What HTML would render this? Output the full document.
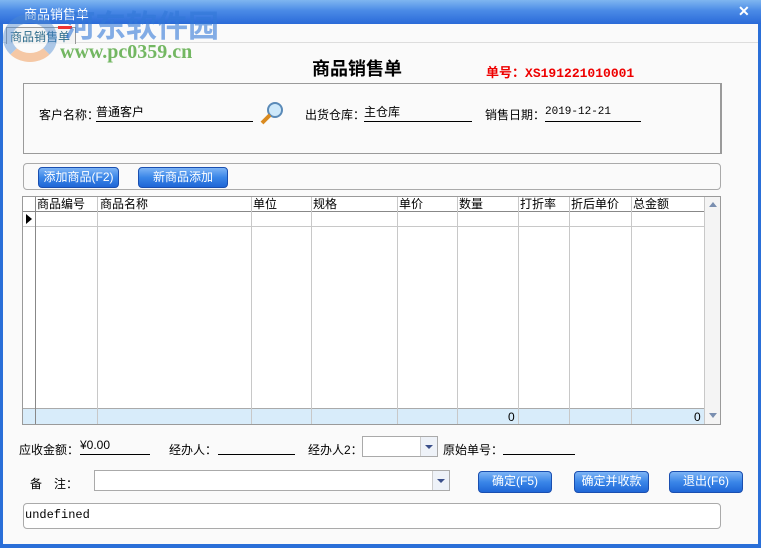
<!DOCTYPE html>
<html><head><meta charset="utf-8"><style>
*{margin:0;padding:0;box-sizing:border-box}
body{width:761px;height:548px;overflow:hidden;background:#2a6fd8;font-family:"Liberation Sans","Noto Sans CJK SC",sans-serif;font-size:12px;color:#000;position:relative}
.a{position:absolute}
.title{left:0;top:0;width:761px;height:24px;background:linear-gradient(#7fb6f0,#4a8ae6 45%,#2a6ad8);}
.win{left:3px;top:24px;width:755px;height:520px;background:#fafafa}
.u{border-bottom:1px solid #000}
.btn{background:linear-gradient(#7db4f5,#3a86e8 50%,#1f66d6);border:1px solid #1a4fb0;border-radius:4px;color:#fff;text-align:center;line-height:19px;font-size:12px}
.grid{left:22px;top:196px;width:699px;height:229px;border:1px solid #9a9a9a;background:#fff}
.vl{top:0;width:1px;height:227px;background:#c8c8c8}
.hd{font-size:12px;top:0;line-height:15px}
</style></head><body>
<div class="a title"></div>
<div class="a" style="left:24px;top:4px;color:#fff;font-size:13px">商品销售单</div>
<div class="a" style="left:738px;top:3px;color:#fff;font-weight:bold;font-size:14px">✕</div>
<div class="a win"></div>
<div class="a" style="left:3px;top:42px;width:755px;height:1px;background:#ddd"></div>
<div class="a" style="left:6px;top:27px;width:70px;height:17px;border:1px solid #999;border-bottom:none;background:#f3f3f3;font-size:12px;padding-left:3px;color:#2a6a8a">商品销售单</div>
<div class="a" style="left:58px;top:26px;width:14px;height:3px;background:#e33"></div>
<div class="a" style="left:64px;top:4px;font-size:31px;font-weight:bold;color:rgba(50,120,215,.6);font-family:'Noto Sans CJK SC',sans-serif;line-height:40px">河东软件园</div>
<div class="a" style="left:60px;top:41px;font-size:20px;font-weight:bold;color:rgba(90,170,70,.85);font-family:'Liberation Serif',serif">www.pc0359.cn</div>
<div class="a" style="left:3px;top:14px;width:54px;height:48px;border-radius:50%;border:9px solid rgba(80,140,210,.45);border-bottom-color:rgba(240,150,80,.5)"></div>

<div class="a" style="left:312px;top:55px;font-size:18px;font-weight:bold">商品销售单</div>
<div class="a" style="left:486px;top:62px;color:#e00;font-weight:bold;font-size:13px">单号：<span style="font-family:'Liberation Mono',monospace">XS191221010001</span></div>

<div class="a" style="left:23px;top:83px;width:699px;height:71px;border:1px solid #9a9a9a;border-right-width:2px"></div>
<div class="a" style="left:39px;top:106px">客户名称：</div>
<div class="a u" style="left:96px;top:104px;width:157px;height:18px;line-height:16px">普通客户</div>
<svg class="a" style="left:259px;top:100px" width="26" height="26"><circle cx="16" cy="10" r="7" fill="#cde8fa" stroke="#5a8ab8" stroke-width="2"/><line x1="11" y1="15" x2="3" y2="23" stroke="#d98a20" stroke-width="4"/></svg>
<div class="a" style="left:305px;top:106px">出货仓库：</div>
<div class="a u" style="left:364px;top:104px;width:108px;height:18px;line-height:16px">主仓库</div>
<div class="a" style="left:485px;top:106px">销售日期：</div>
<div class="a u" style="left:545px;top:104px;width:96px;height:18px;line-height:16px;font-family:'Liberation Mono',monospace;font-size:11px">2019-12-21</div>

<div class="a" style="left:23px;top:163px;width:698px;height:27px;border:1px solid #aaa;border-radius:4px"></div>
<div class="a btn" style="left:38px;top:167px;width:81px;height:21px">添加商品(F2)</div>
<div class="a btn" style="left:138px;top:167px;width:90px;height:21px">新商品添加</div>

<div class="a grid">
<div class="a" style="left:0;top:0;width:681px;height:15px;border-bottom:1px solid #888"></div>
<div class="a" style="left:0;top:15px;width:681px;height:15px;border-bottom:1px solid #c8c8c8"></div>
<div class="a" style="left:0;top:211px;width:681px;height:16px;background:#d8ecfa;border-top:1px solid #aaa"></div>
<div class="a vl" style="left:12px;background:#888"></div>
<div class="a vl" style="left:74px"></div><div class="a vl" style="left:228px"></div><div class="a vl" style="left:288px"></div><div class="a vl" style="left:374px"></div><div class="a vl" style="left:434px"></div><div class="a vl" style="left:495px"></div><div class="a vl" style="left:546px"></div><div class="a vl" style="left:608px"></div><div class="a vl" style="left:681px"></div>
<div class="a hd" style="left:14px">商品编号</div><div class="a hd" style="left:77px">商品名称</div><div class="a hd" style="left:230px">单位</div><div class="a hd" style="left:290px">规格</div><div class="a hd" style="left:376px">单价</div><div class="a hd" style="left:436px">数量</div><div class="a hd" style="left:497px">打折率</div><div class="a hd" style="left:548px">折后单价</div><div class="a hd" style="left:610px">总金额</div>
<div class="a" style="left:3px;top:17px;width:0;height:0;border-left:6px solid #000;border-top:5px solid transparent;border-bottom:5px solid transparent"></div>
<div class="a" style="left:485px;top:213px">0</div><div class="a" style="left:671px;top:213px">0</div>
<div class="a" style="left:682px;top:0;width:15px;height:227px;background:#f4f4f4"></div>
<div class="a" style="left:686px;top:5px;border-bottom:5px solid #7a8fb0;border-left:4px solid transparent;border-right:4px solid transparent"></div>
<div class="a" style="left:686px;top:216px;border-top:5px solid #7a8fb0;border-left:4px solid transparent;border-right:4px solid transparent"></div>
</div>

<div class="a" style="left:19px;top:441px">应收金额：</div>
<div class="a u" style="left:80px;top:437px;width:70px;height:18px;line-height:16px">¥0.00</div>
<div class="a" style="left:169px;top:441px">经办人：</div>
<div class="a u" style="left:218px;top:437px;width:77px;height:18px"></div>
<div class="a" style="left:308px;top:441px">经办人2：</div>
<div class="a" style="left:362px;top:436px;width:76px;height:21px;border:1px solid #aaa;background:#fff"></div>
<div class="a" style="left:420px;top:437px;width:17px;height:19px;background:#eef2f8;border-left:1px solid #ccc"></div>
<div class="a" style="left:425px;top:445px;border-top:4px solid #3a4f8a;border-left:4px solid transparent;border-right:4px solid transparent"></div>
<div class="a" style="left:443px;top:441px">原始单号：</div>
<div class="a u" style="left:503px;top:437px;width:72px;height:18px"></div>

<div class="a" style="left:30px;top:475px">备　注：</div>
<div class="a" style="left:94px;top:470px;width:356px;height:21px;border:1px solid #aaa;background:#fff"></div>
<div class="a" style="left:432px;top:471px;width:17px;height:19px;background:#eef2f8;border-left:1px solid #ccc"></div>
<div class="a" style="left:437px;top:479px;border-top:4px solid #3a4f8a;border-left:4px solid transparent;border-right:4px solid transparent"></div>
<div class="a btn" style="left:478px;top:471px;width:74px;height:22px">确定(F5)</div>
<div class="a btn" style="left:574px;top:471px;width:75px;height:22px">确定并收款</div>
<div class="a btn" style="left:669px;top:471px;width:74px;height:22px">退出(F6)</div>

<div class="a" style="left:23px;top:503px;width:698px;height:26px;border:1px solid #aaa;border-radius:4px;background:#fff;font-family:'Liberation Mono',monospace;font-size:12px;padding:4px 0 0 1px">undefined</div>
</body></html>
